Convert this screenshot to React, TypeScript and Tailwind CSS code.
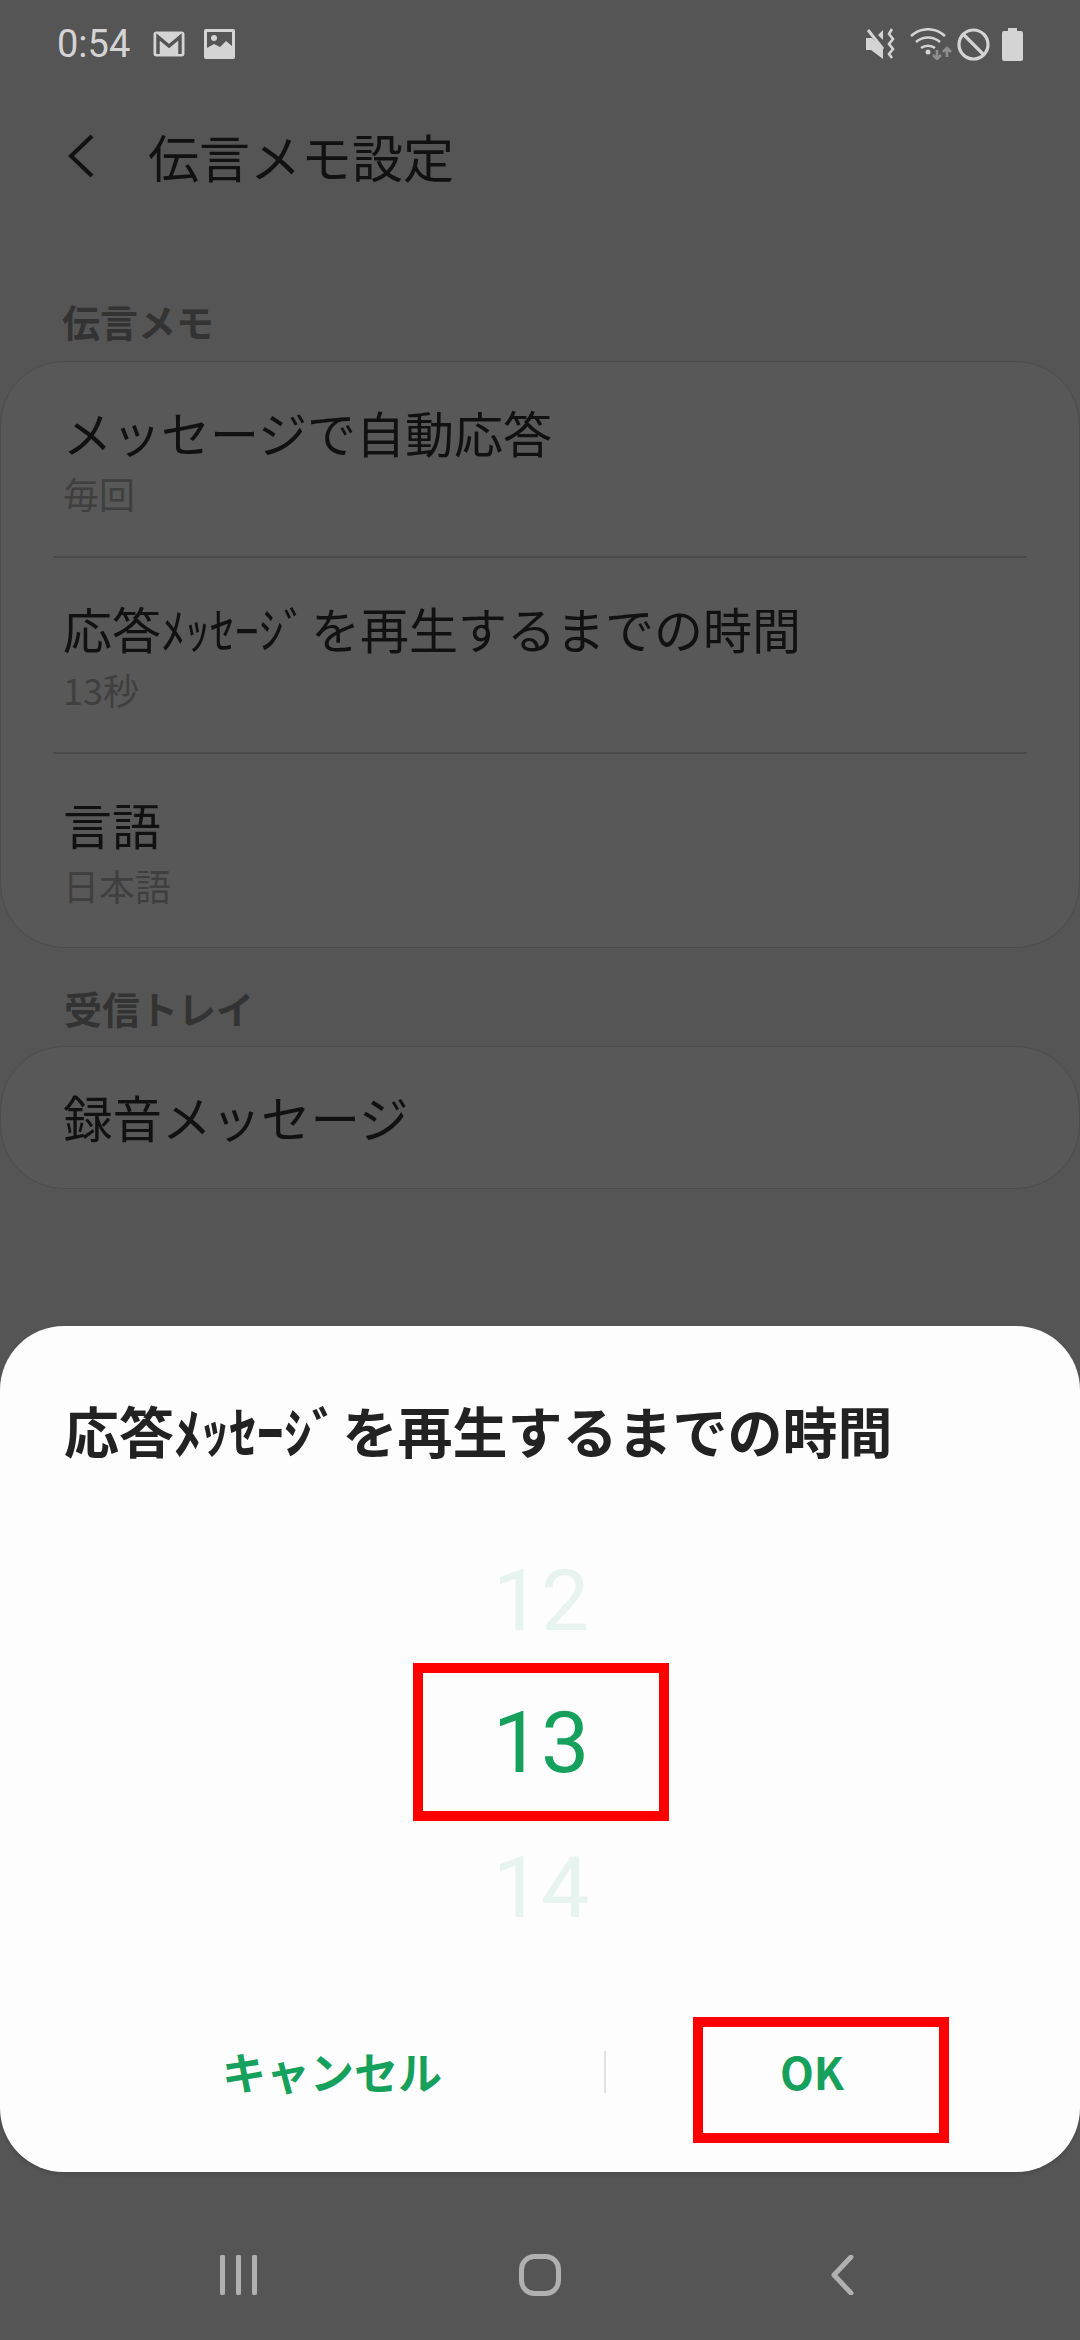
const jp = "font-['Noto_Sans_CJK_JP','Noto_Sans',sans-serif]";

function StatusBar() {
  return (
    <div className="h-[88px] shrink-0 flex items-center justify-between pl-[57px] pr-[57px] text-[#d4d4d4]">
      <div className="flex items-center">
        <span className="font-['Roboto',sans-serif] text-[38px] leading-none w-[96px]">0:54</span>
        <svg width="32" height="26" viewBox="0 0 32 26" className="mr-[19px]">
          <rect width="31" height="25" x="0.5" y="0.5" rx="3" fill="#d4d4d4" />
          <path d="M5 23V6l11 9 11-9v17" fill="none" stroke="#555" strokeWidth="3.5" />
        </svg>
        <svg width="31" height="30" viewBox="0 0 31 30">
          <rect width="31" height="30" rx="2" fill="#d4d4d4" />
          <rect x="3" y="3" width="25" height="18" fill="#555" />
          <circle cx="10" cy="9" r="3" fill="#d4d4d4" />
          <path d="M3 24v-5l7-4 6 3 6-6 6 5v7z" fill="#d4d4d4" />
        </svg>
      </div>
      <div className="flex items-center">
        <svg width="32" height="32" viewBox="0 0 32 32" className="mr-[13px]">
          <path d="M1 10h6l11 11v10L6 22H1z" fill="#d4d4d4" />
          <path d="M3 2l15 19" stroke="#d4d4d4" strokeWidth="3" />
          <path d="M18 2v10l-5-5z" fill="#d4d4d4" />
          <path d="M27 1l-3 5 4 5-4 5 4 5-4 5 3 4" fill="none" stroke="#d4d4d4" strokeWidth="2.6" />
        </svg>
        <svg width="42" height="32" viewBox="0 0 42 32" className="mr-[5px]">
          <path d="M1 8c10-9 24-9 34 0M6 14c7-6 17-6 24 0M11 20c4-3 10-3 14 0" fill="none" stroke="#d4d4d4" strokeWidth="2.6" />
          <circle cx="18" cy="24" r="2.5" fill="#d4d4d4" />
          <path d="M27 22v9M23 27l4 4 4-4M37 29v-9M33 24l4-4 4 4" fill="none" stroke="#8e8e8e" strokeWidth="2.6" />
        </svg>
        <svg width="33" height="33" viewBox="0 0 33 33" className="mr-[12px]">
          <circle cx="16.5" cy="16.5" r="14.5" fill="none" stroke="#d4d4d4" strokeWidth="3.2" />
          <path d="M6.5 6.5l20 20" stroke="#d4d4d4" strokeWidth="3.2" />
        </svg>
        <svg width="21" height="33" viewBox="0 0 21 33">
          <path d="M6 0h9v3h4a2 2 0 0 1 2 2v26a2 2 0 0 1-2 2H2a2 2 0 0 1-2-2V5a2 2 0 0 1 2-2h4z" fill="#d4d4d4" />
        </svg>
      </div>
    </div>
  );
}

function Row({ title, sub, last }: { title: string; sub: string; last?: boolean }) {
  return (
    <div className={`mx-[52px] h-[196px] pt-[40px] ${last ? "" : "border-b-2 border-[#4b4b4b]"}`}>
      <div className={`${jp} text-[49px] leading-[60px] text-[#111] ml-[10px] whitespace-nowrap [word-spacing:-8px]`}>{title}</div>
      <div className={`${jp} text-[36px] leading-[44px] text-[#3f3f3f] mt-[9px] ml-[10px]`}>{sub}</div>
    </div>
  );
}

export default function App() {
  return (
    <div className="w-[1080px] h-[2340px] bg-[#555555] flex flex-col overflow-hidden">
      <StatusBar />

      <div className="h-[140px] shrink-0 flex items-center pl-[68px] pb-[4px]">
        <svg width="26" height="44" viewBox="0 0 26 44" className="mr-[54px]">
          <path d="M24 2L3 22l21 20" fill="none" stroke="#111" strokeWidth="4" />
        </svg>
        <span className={`${jp} text-[51px] leading-none text-[#111]`}>伝言メモ設定</span>
      </div>

      <div className={`${jp} font-bold text-[38px] leading-[44px] text-[#333] pl-[62px] pt-[71px] pb-[18px] shrink-0`}>伝言メモ</div>
      <div className="h-[587px] shrink-0 rounded-[64px] border border-[#4c4c4c] bg-[#585858]">
        <Row title="メッセージで自動応答" sub="毎回" />
        <Row title="応答ﾒｯｾｰｼﾞ を再生するまでの時間" sub="13秒" />
        <Row title="言語" sub="日本語" last />
      </div>

      <div className={`${jp} font-bold text-[38px] leading-[44px] text-[#333] pl-[64px] pt-[38px] pb-[16px] shrink-0`}>受信トレイ</div>
      <div className="h-[143px] shrink-0 rounded-[64px] border border-[#4c4c4c] bg-[#585858] flex items-center pl-[62px] pb-[2px]">
        <span className={`${jp} text-[49.5px] leading-none text-[#111]`}>録音メッセージ</span>
      </div>

      <div className="mt-[137px] h-[846px] shrink-0 rounded-[64px] bg-[#fdfdfd] shadow-[0_2px_4px_rgba(0,0,0,0.15)] flex flex-col">
        <div className={`${jp} font-bold text-[55px] leading-[60px] text-[#222] pl-[64px] pt-[73px] whitespace-nowrap [word-spacing:-9px]`}>
          応答ﾒｯｾｰｼﾞ を再生するまでの時間
        </div>
        <div className="flex flex-col items-center font-['Roboto',sans-serif] text-[86px] leading-none mt-[98px] pl-[2px]">
          <span className="text-[#e6f3ee] h-[106px] pt-[1px]">12</span>
          <div className="w-[256px] h-[158px] border-[10px] border-[#ff0000] text-[#15a05c] flex items-center justify-center pt-[2px]">13</div>
          <span className="text-[#e6f3ee] mt-[24px]">14</span>
        </div>
        <div className="flex items-center mt-auto mb-[29px] h-[126px]">
          <div className={`${jp} font-bold text-[44px] leading-none text-[#15a05c] w-[604px] pl-[222px] mb-[18px]`}>キャンセル</div>
          <div className="w-[2px] h-[42px] bg-[#e2e2e2] mb-[16px]" />
          <div className={`${jp} font-bold text-[44px] leading-none text-[#15a05c] w-[256px] h-[126px] ml-[87px] border-[10px] border-[#ff0000] flex items-center justify-center pr-[18px] pb-[18px]`}>OK</div>
        </div>
      </div>

      <div className="flex-1 flex items-center pl-[220px] pt-[38px]">
        <svg width="37" height="40" viewBox="0 0 37 40" className="mr-[262px]">
          <path d="M2.5 2v36M18.5 2v36M34.5 2v36" stroke="#b0b0b0" strokeWidth="5" strokeLinecap="round" />
        </svg>
        <svg width="42" height="42" viewBox="0 0 42 42" className="mr-[269px]">
          <rect x="2.5" y="2.5" width="37" height="37" rx="13" fill="none" stroke="#b0b0b0" strokeWidth="5" />
        </svg>
        <svg width="24" height="40" viewBox="0 0 24 40">
          <path d="M21 2L4 20l17 18" fill="none" stroke="#b0b0b0" strokeWidth="5" strokeLinecap="round" strokeLinejoin="round" />
        </svg>
      </div>
    </div>
  );
}
